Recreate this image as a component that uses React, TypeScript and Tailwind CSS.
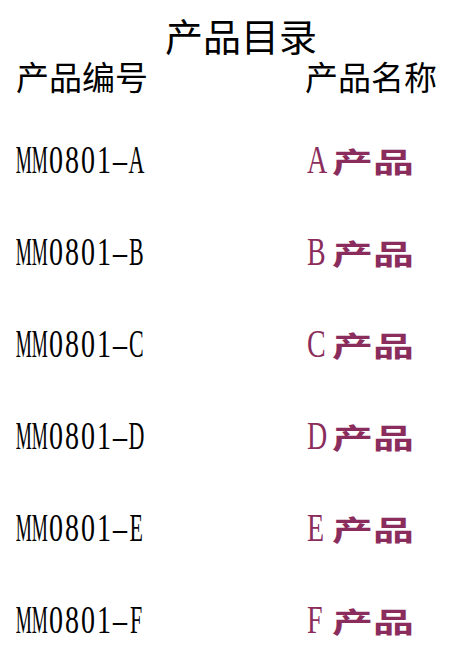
const CJK = "font-['Noto_Sans_CJK_SC',sans-serif]";
const SERIF = "font-['Liberation_Serif',serif]";

const ITEMS = ['A', 'B', 'C', 'D', 'E', 'F'];

// SimSun-style half-width cells: each glyph squeezed into a 16px slot
function cellScale(ch: string) {
  if (ch === 'M') return 'scale-x-[0.45]';
  if (/[A-Z]/.test(ch)) return 'scale-x-[0.55]';
  return 'scale-x-[0.7]';
}

function Code({ text }: { text: string }) {
  return (
    <div className={`flex h-[40px] text-[40px] leading-none ${SERIF}`}>
      {text.split('').map((ch, i) => (
        <span key={i} className="w-[16px] flex justify-center overflow-visible">
          <span className={`inline-block ${cellScale(ch)}`}>{ch === '-' ? '–' : ch}</span>
        </span>
      ))}
    </div>
  );
}

export default function App() {
  return (
    <div className="w-[453px] h-[650px] bg-white text-black overflow-hidden">
      <div className={`pt-[16px] pl-[29px] text-center text-[38px] leading-none ${CJK}`}>产品目录</div>

      <div className={`mt-[6px] pl-[16px] grid grid-cols-[289px_1fr] text-[33px] leading-none ${CJK}`}>
        <div>产品编号</div>
        <div>产品名称</div>
      </div>

      <div className="mt-[21px] pl-[16px]">
        {ITEMS.map((letter) => (
          <div key={letter} className="grid grid-cols-[289px_1fr] h-[92px] items-center">
            <Code text={`MM0801-${letter}`} />
            <div className="flex items-center h-[41px] text-[#8b2d5c]">
              <span className="w-[27px] pl-[2px]">
                <span className={`inline-block origin-left scale-x-[0.7] text-[40px] leading-none ${SERIF}`}>{letter}</span>
              </span>
              <span className={`inline-block scale-y-[0.7] text-[41px] leading-none font-bold ${CJK}`}>产品</span>
            </div>
          </div>
        ))}
      </div>
    </div>
  );
}
